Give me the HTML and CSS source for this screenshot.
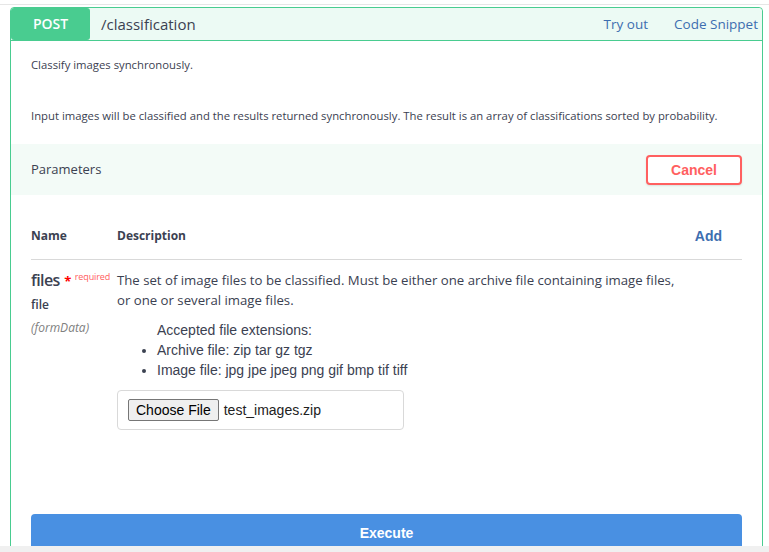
FILE: index.html
```html
<!DOCTYPE html>
<html>
<head>
<meta charset="utf-8">
<link rel="stylesheet" href="styles.css">
</head>
<body>
<div class="topline"></div>
<div class="opblock">
  <div class="summary">
    <span class="method">POST</span>
    <span class="path">/classification</span>
    <span class="spacer"></span>
    <a class="link">Try out</a>
    <a class="link">Code Snippet</a>
  </div>
  <div class="desc">
    <p>Classify images synchronously.</p>
    <p>Input images will be classified and the results returned synchronously. The result is an array of classifications sorted by probability.</p>
  </div>
  <div class="section-header">
    <h4>Parameters</h4>
    <button class="cancel">Cancel</button>
  </div>
  <div class="params">
    <div class="thead">
      <div class="col-name">Name</div>
      <div class="col-desc">Description</div>
      <div class="add">Add</div>
    </div>
    <div class="row">
      <div class="col-name">
        <div class="pname">files <span class="star">*</span><sup class="req">required</sup></div>
        <div class="ptype">file</div>
        <div class="pin">(formData)</div>
      </div>
      <div class="col-desc">
        <p class="pdesc">The set of image files to be classified. Must be either one archive file containing image files, or one or several image files.</p>
        <div class="ext">
          <div class="ext-title">Accepted file extensions:</div>
          <ul>
            <li>Archive file: zip tar gz tgz</li>
            <li>Image file: jpg jpe jpeg png gif bmp tif tiff</li>
          </ul>
        </div>
        <div class="filebox">
          <span class="choose">Choose File</span>
          <span class="fname">test_images.zip</span>
        </div>
      </div>
    </div>
  </div>
  <div class="exec-wrap">
    <button class="execute">Execute</button>
  </div>
</div>
<div class="hscroll"></div>
</body>
</html>
```
FILE: styles.css
```css
html, body {
  margin: 0;
  padding: 0;
  background: #fff;
  overflow: hidden;
  height: 552px;
}
body {
  font-family: "Open Sans", sans-serif;
  color: #3b4151;
}
.topline {
  height: 4px;
  border-bottom: 1px solid #e6e6e6;
  margin-bottom: 2px;
}
.opblock {
  margin: 0 6px 0 10px;
  border: 1px solid #49cc90;
  border-radius: 4px 4px 0 0;
  height: 600px;
}
.summary {
  display: flex;
  align-items: center;
  height: 32px;
  background: #ecfaf4;
  border-bottom: 1px solid #49cc90;
  border-radius: 4px 4px 0 0;
}
.method {
  width: 79px;
  height: 32px;
  background: #49cc90;
  color: #fff;
  border-radius: 3px;
  font-size: 14px;
  font-weight: 600;
  display: flex;
  align-items: center;
  justify-content: center;
  padding-bottom: 1px;
  box-sizing: border-box;
}
.path {
  margin-left: 11px;
  font-size: 15px;
  color: #3b4151;
  padding-bottom: 1px;
}
.spacer { flex: 1; }
.link {
  color: #3d6eb0;
  font-size: 13.5px;
  margin-left: 26px;
  margin-right: 4px;
  padding-bottom: 1px;
}
.link:last-child { margin-left: 22px; }
.desc {
  padding: 16px 20px 0 20px;
  font-size: 11.3px;
  height: 87px;
}
.desc p {
  margin: 0 0 36px;
  line-height: 15px;
}
.section-header {
  display: flex;
  align-items: center;
  justify-content: space-between;
  height: 51px;
  padding: 0 20px;
  background: #f3fbf7;
}
.section-header h4 {
  margin: 0;
  font-size: 13px;
  font-weight: 400;
  padding-bottom: 1px;
}
.cancel {
  width: 96px;
  height: 30px;
  border: 2px solid #ff6060;
  border-radius: 4px;
  background: #fff;
  color: #ff6060;
  font-family: "Liberation Sans", Arial, sans-serif;
  font-weight: 700;
  font-size: 14px;
  box-shadow: 0 1px 2px rgba(0,0,0,.1);
}
.params {
  padding: 0 20px;
}
.thead {
  display: flex;
  align-items: center;
  height: 64px;
  border-bottom: 1px solid #d9d9d9;
  font-size: 12px;
  font-weight: 700;
}
.thead .col-name, .thead .col-desc { margin-top: 17px; }
.col-name { width: 86px; flex: none; }
.col-desc { flex: 1; }
.add {
  color: #3d6eb0;
  font-family: "Liberation Sans", Arial, sans-serif;
  font-weight: 700;
  font-size: 14px;
  margin-right: 20px;
  margin-top: 18px;
}
.row {
  display: flex;
  padding-top: 10px;
}
.pname {
  font-size: 16px;
  font-weight: 600;
  line-height: 20px;
  height: 20px;
  letter-spacing: -0.6px;
  white-space: nowrap;
}
.star {
  color: #ff0000;
  font-size: 13px;
  font-weight: 700;
  margin-left: 1px;
  line-height: 0;
}
.req {
  color: #ff6060;
  font-size: 9px;
  font-weight: 400;
  letter-spacing: -0.1px;
  vertical-align: 6px;
  line-height: 0;
  margin-left: 4px;
}
.ptype {
  font-size: 12px;
  font-weight: 600;
  margin-top: 7px;
  line-height: 16px;
}
.pin {
  font-size: 12px;
  font-style: italic;
  color: #808080;
  margin-top: 7px;
  line-height: 16px;
}
.pdesc {
  margin: 0;
  font-size: 13.2px;
  line-height: 20px;
  padding-right: 56px;
}
.ext {
  font-family: "Liberation Sans", Arial, sans-serif;
  font-size: 14px;
  line-height: 20px;
  margin-top: 10px;
  padding-left: 40px;
}
.ext ul {
  margin: 0;
  padding-left: 0;
  list-style-position: outside;
}
.filebox {
  margin-top: 10px;
  width: 287px;
  height: 40px;
  border: 1px solid #d9d9d9;
  border-radius: 4px;
  display: flex;
  align-items: center;
  padding-left: 10px;
  box-sizing: border-box;
  font-family: "Liberation Sans", Arial, sans-serif;
  font-size: 14px;
}
.choose {
  display: inline-block;
  padding: 1px 7px;
  border: 1px solid #767676;
  border-radius: 2px;
  background: #efefef;
  color: #000;
  line-height: 18px;
}
.fname {
  margin-left: 5px;
  color: #222;
}
.exec-wrap {
  padding: 84px 20px 0;
}
.execute {
  width: 100%;
  height: 40px;
  border: none;
  border-radius: 4px;
  background: #4990e2;
  color: #fff;
  font-family: "Liberation Sans", Arial, sans-serif;
  font-weight: 700;
  font-size: 14px;
  padding-bottom: 4px;
}
.hscroll {
  position: fixed;
  left: 0;
  right: 0;
  bottom: 0;
  height: 6px;
  background: #f0f0f0;
}
```
